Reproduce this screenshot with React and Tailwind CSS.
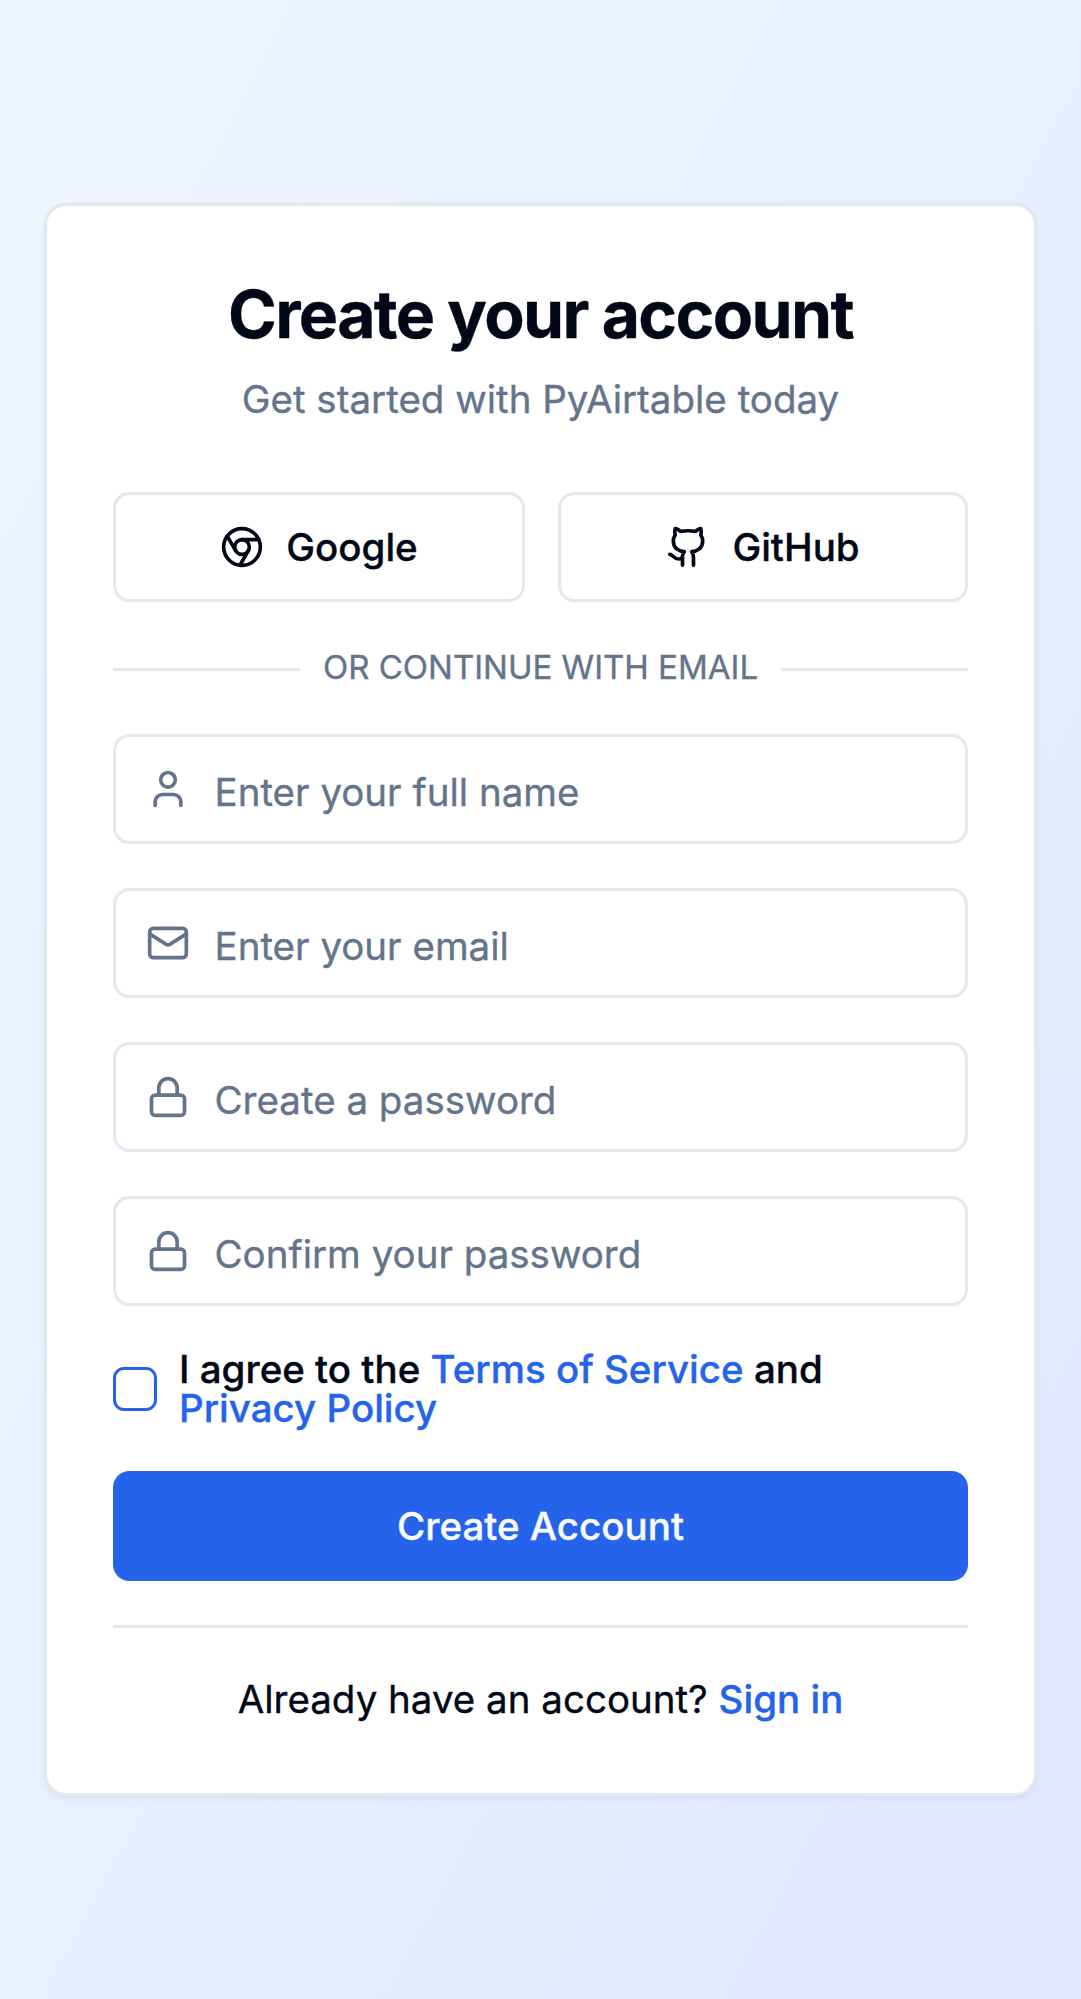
import { Chrome, Github, User, Mail, Lock } from "lucide-react";

const fields = [
  { Icon: User, placeholder: "Enter your full name", type: "text" },
  { Icon: Mail, placeholder: "Enter your email", type: "email" },
  { Icon: Lock, placeholder: "Create a password", type: "password" },
  { Icon: Lock, placeholder: "Confirm your password", type: "password" },
];

function SocialButton({ Icon, children }) {
  return (
    <button className="flex h-[110px] items-center justify-center rounded-[16.5px] border-3 border-[#e2e8f0] bg-white text-[38.5px] leading-[55px] font-medium">
      <Icon className="mr-[22px] size-[44px]" />
      {children}
    </button>
  );
}

function Field({ Icon, placeholder, type }) {
  return (
    <div className="relative">
      <Icon className="absolute top-[33px] left-[33px] size-[44px] text-[#64748b]" />
      <input
        type={type}
        placeholder={placeholder}
        className="block h-[110px] w-full rounded-[16.5px] border-3 border-[#e2e8f0] bg-white pt-[25px] pb-[19px] pr-[33px] pl-[98.5px] text-[38.5px] leading-[55px] outline-none placeholder:text-[#64748b]"
      />
    </div>
  );
}

export default function App() {
  return (
    <main className="flex min-h-screen items-center justify-center bg-linear-to-br/srgb from-[#eff6ff] to-[#e0e7ff] p-[44px] font-[Inter,sans-serif] text-[#020817] [-webkit-text-stroke-width:0.35px]">
      <div className="w-full rounded-[22px] border-3 border-[#e2e8f0] bg-white shadow-[0_2.75px_5.5px_0_rgba(0,0,0,0.05)]">
        <header className="flex flex-col gap-[16.5px] px-[66px] pt-[66.75px] pb-[65px] text-center">
          <h1 className="text-[66px] leading-[82.5px] font-bold tracking-[-1.65px]">Create your account</h1>
          <p className="text-[38.5px] leading-[55px] text-[#64748b]">Get started with PyAirtable today</p>
        </header>
        <div className="px-[66px] pb-[65.75px]">
          <div className="grid grid-cols-[412px_410px] gap-[33px]">
            <SocialButton Icon={Chrome}>Google</SocialButton>
            <SocialButton Icon={Github}>GitHub</SocialButton>
          </div>
          <div className="mt-[43px] flex items-center text-[33px] leading-[44px] text-[#64748b] uppercase">
            <span className="mt-[4px] h-[3px] flex-1 bg-[#e2e8f0]" />
            <span className="px-[23px]">Or continue with email</span>
            <span className="mt-[4px] h-[3px] flex-1 bg-[#e2e8f0]" />
          </div>
          <form className="mt-[45px]">
            <div className="flex flex-col gap-[44px]">
              {fields.map((f) => (
                <Field key={f.placeholder} {...f} />
              ))}
            </div>
            <div className="mt-[44px] flex items-center gap-[22px]">
              <button type="button" aria-label="Agree" className="size-[44px] shrink-0 rounded-[11px] border-[#2563eb] border-3" />
              <p className="text-[38.5px] leading-[38.5px] font-medium">
                I agree to the <a className="text-[#2563eb]">Terms of Service</a> and <a className="text-[#2563eb]">Privacy Policy</a>
              </p>
            </div>
            <button type="button" className="mt-[44px] block h-[110px] w-full rounded-[16.5px] bg-[#2563eb] text-[38.5px] leading-[55px] font-medium text-[#f8fafc]">
              Create Account
            </button>
          </form>
          <div className="mt-[44px] h-[2.75px] bg-[#e2e8f0]" />
          <p className="mt-[44px] text-center text-[38.5px] leading-[55px]">
            Already have an account? <a className="font-medium text-[#2563eb]">Sign in</a>
          </p>
        </div>
      </div>
    </main>
  );
}
